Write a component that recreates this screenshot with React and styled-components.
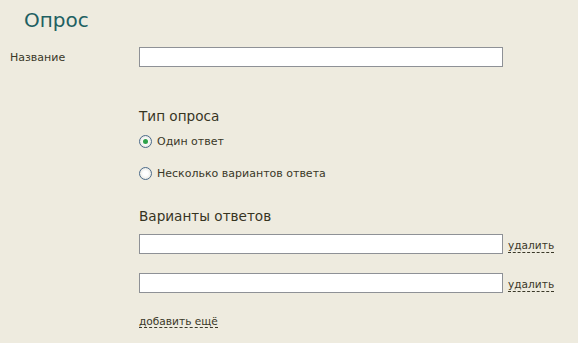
import React, { useState } from "react";
import styled, { createGlobalStyle } from "styled-components";

const Global = createGlobalStyle`
  html, body {
    margin: 0;
    padding: 0;
    background: #eeebdf;
  }
  body {
    font-family: "DejaVu Sans", Verdana, sans-serif;
    color: #3a3828;
  }
`;

const Page = styled.div`
  width: 578px;
  height: 343px;
  padding: 0 10px;
  box-sizing: border-box;
  overflow: hidden;
`;

const Title = styled.h1`
  margin: 0;
  padding: 7px 0 0 14px;
  font-size: 20px;
  font-weight: normal;
  line-height: 26px;
  color: #1e6062;
`;

const Row = styled.div`
  display: grid;
  grid-template-columns: 129px 1fr;
  align-items: center;
  margin-top: ${(p) => p.$top || 0}px;
`;

const Label = styled.label`
  font-size: 11px;
  color: #3a3828;
`;

const Field = styled.input`
  width: 364px;
  height: 20px;
  box-sizing: border-box;
  border: 1px solid #8e9196;
  background: #fff;
  margin: 0;
  padding: 0 3px;
  font: inherit;
  font-size: 11px;
  outline: none;
`;

const Section = styled.div`
  margin-left: 129px;
  margin-top: ${(p) => p.$top || 0}px;
`;

const Heading = styled.h2`
  margin: 0;
  margin-top: ${(p) => p.$top || 0}px;
  font-size: 13.6px;
  font-weight: normal;
  line-height: 18px;
  color: #36341f;
`;

const RadioRow = styled.label`
  display: flex;
  align-items: center;
  gap: 5px;
  height: 16px;
  margin-top: ${(p) => p.$top || 0}px;
  font-size: 11px;
  cursor: pointer;
`;

const RadioDot = styled.span`
  width: 11px;
  height: 11px;
  border-radius: 50%;
  border: 1px solid #4b6a8a;
  background: radial-gradient(circle at 50% 50%, #ffffff 30%, #dcdcd2 100%);
  display: flex;
  align-items: center;
  justify-content: center;
  flex: none;
  &::after {
    content: "";
    width: 5px;
    height: 5px;
    border-radius: 50%;
    background: ${(p) => (p.$on ? "#2fa24a" : "transparent")};
  }
`;

const AnswerRow = styled.div`
  display: flex;
  align-items: center;
  gap: 5px;
  margin-top: ${(p) => p.$top || 0}px;
`;

const DashLink = styled.a`
  font-size: 10.6px;
  color: #3a3828;
  text-decoration: none;
  border-bottom: 1px dashed #3a3828;
  line-height: 13px;
  cursor: pointer;
  position: relative;
  top: 2px;
`;

const AddWrap = styled.div`
  margin-top: ${(p) => p.$top || 0}px;
`;

export default function App() {
  const [multi, setMulti] = useState(false);
  return (
    <Page>
      <Global />
      <Title>Опрос</Title>
      <Row $top={14}>
        <Label>Название</Label>
        <Field type="text" />
      </Row>
      <Section $top={40}>
        <Heading>Тип опроса</Heading>
        <RadioRow $top={8} onClick={() => setMulti(false)}>
          <RadioDot $on={!multi} />
          Один ответ
        </RadioRow>
        <RadioRow $top={16} onClick={() => setMulti(true)}>
          <RadioDot $on={multi} />
          Несколько вариантов ответа
        </RadioRow>
        <Heading $top={26}>Варианты ответов</Heading>
        <AnswerRow $top={9}>
          <Field type="text" />
          <DashLink>удалить</DashLink>
        </AnswerRow>
        <AnswerRow $top={19}>
          <Field type="text" />
          <DashLink>удалить</DashLink>
        </AnswerRow>
        <AddWrap $top={15}>
          <DashLink>добавить ещё</DashLink>
        </AddWrap>
      </Section>
    </Page>
  );
}
